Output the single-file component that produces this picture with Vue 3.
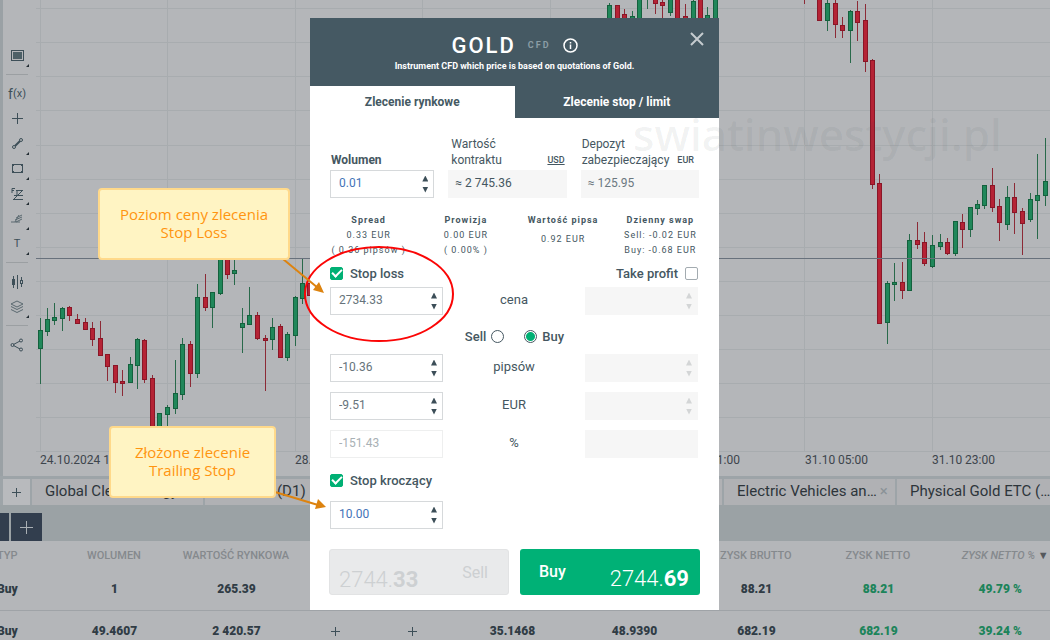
<script setup>
import { ref } from 'vue'

const gridY = [8, 42, 76, 110, 145, 179, 213, 247, 281, 315, 349, 383, 417, 451]
const gridX = [40, 167, 295, 422, 550, 677, 804, 932]

// [x, high, low, body top, body bottom, direction]
const candles = [
  [40, 318, 384, 330, 349, 'g'], [47, 308, 336, 319, 332, 'g'], [54, 303, 325, 317, 321, 'g'],
  [62, 307, 331, 308, 319, 'g'], [69, 306, 321, 307, 316, 'r'], [77, 314, 324, 319, 324, 'r'],
  [85, 318, 330, 322, 330, 'r'], [92, 322, 346, 328, 340, 'r'], [100, 321, 356, 338, 356, 'r'],
  [107, 354, 381, 354, 367, 'r'], [115, 365, 393, 365, 383, 'r'], [122, 370, 396, 381, 384, 'r'],
  [130, 357, 383, 364, 383, 'g'], [137, 338, 389, 339, 366, 'g'], [144, 339, 383, 340, 380, 'r'],
  [152, 375, 430, 378, 430, 'r'], [159, 413, 430, 413, 430, 'g'], [167, 405, 428, 407, 415, 'g'],
  [175, 360, 414, 393, 409, 'g'], [182, 338, 400, 344, 395, 'g'], [190, 341, 387, 344, 374, 'r'],
  [197, 284, 378, 297, 374, 'g'], [205, 274, 311, 297, 308, 'r'], [212, 292, 328, 292, 308, 'g'],
  [220, 250, 295, 252, 294, 'g'], [227, 250, 279, 252, 275, 'r'], [234, 255, 285, 270, 274, 'g'],
  [242, 308, 353, 323, 328, 'g'], [249, 287, 325, 315, 325, 'g'], [257, 312, 340, 315, 339, 'r'],
  [265, 335, 391, 338, 341, 'r'], [272, 318, 350, 327, 340, 'g'], [280, 324, 358, 326, 358, 'r'],
  [287, 332, 361, 334, 358, 'g'], [295, 296, 346, 297, 336, 'g'], [302, 258, 304, 283, 299, 'g'],
  [309, 283, 296, 283, 296, 'r'],
  [609, 3, 22, 5, 22, 'g'], [617, 5, 22, 5, 22, 'r'], [624, 9, 22, 14, 22, 'r'],
  [632, 11, 22, 16, 22, 'g'], [639, 0, 22, -2, 22, 'g'], [647, 0, 9, 0, 0, 'g'],
  [655, 0, 14, -2, 4, 'r'], [662, 0, 22, 2, 6, 'r'], [670, 0, 16, -2, 13, 'g'],
  [677, 0, 22, -2, 22, 'r'], [685, 4, 22, 16, 22, 'r'], [693, 0, 22, 1, 22, 'g'],
  [700, 0, 22, -2, 22, 'r'], [707, 7, 22, 15, 22, 'g'], [715, 0, 22, -2, 22, 'g'],
  [804, 0, 4, 0, 0, 'r'], [819, 0, 21, -2, 21, 'r'], [827, 0, 31, 3, 21, 'g'],
  [835, 0, 38, 3, 25, 'r'], [842, 17, 38, 25, 31, 'r'], [850, 10, 63, 11, 31, 'g'],
  [857, 1, 41, 11, 23, 'r'], [865, 4, 72, 20, 62, 'r'], [872, 59, 189, 60, 185, 'r'],
  [879, 174, 324, 183, 324, 'r'], [887, 281, 344, 283, 323, 'g'], [894, 263, 301, 282, 285, 'g'],
  [902, 262, 299, 282, 291, 'r'], [909, 234, 291, 240, 291, 'g'], [917, 222, 249, 240, 245, 'r'],
  [924, 232, 266, 242, 264, 'r'], [932, 235, 268, 245, 267, 'g'], [940, 234, 250, 242, 247, 'g'],
  [947, 238, 255, 242, 254, 'r'], [955, 221, 256, 221, 254, 'g'], [962, 214, 248, 222, 230, 'r'],
  [970, 207, 237, 207, 230, 'g'], [977, 200, 215, 204, 209, 'g'], [984, 185, 209, 185, 206, 'g'],
  [992, 168, 212, 185, 208, 'r'], [999, 199, 241, 206, 223, 'r'], [1007, 186, 230, 197, 225, 'g'],
  [1014, 183, 234, 197, 213, 'r'], [1022, 208, 255, 211, 224, 'r'], [1030, 193, 222, 199, 220, 'g'],
  [1037, 154, 239, 195, 201, 'g'], [1045, 138, 206, 181, 196, 'g'],
]

const times = [
  [40, '24.10.2024 11:00'], [295, '28.10 05:00'], [677, '30.10 11:00'],
  [805, '31.10 05:00'], [932, '31.10 23:00'],
]

const tabs = [
  { id: 1, name: 'Global Clean Energy' },
  { id: 2, name: 'Amazon (D1)' },
  { id: 3, name: '' },
  { id: 4, name: '' },
  { id: 5, name: 'Electric Vehicles an…', close: true },
  { id: 6, name: 'Physical Gold ETC (…' },
]

const rows = [
  ['Buy', '1', '265.39', '', '', '', '', '88.21', '88.21', '49.79 %'],
  ['Buy', '49.4607', '2 420.57', '+', '+', '35.1468', '48.9390', '682.19', '682.19', '39.24 %'],
]

const volume = ref('0.01')
const stopLoss = ref(true)
const takeProfit = ref(false)
const side = ref('buy')
const trailing = ref(true)
const trailingValue = ref('10.00')
const levels = ref([
  { id: 'price', label: 'cena', value: '2734.33', spin: true },
  { id: 'pips', label: 'pipsów', value: '-10.36', spin: true },
  { id: 'eur', label: 'EUR', value: '-9.51', spin: true },
  { id: 'percent', label: '%', value: '-151.43', spin: false },
])
</script>

<template>
  <div class="app">
    <section class="workspace">
      <nav class="tools" aria-label="Narzędzia wykresu">
        <div class="group">
          <button class="tool more" aria-label="Szablon">
            <svg width="13" height="11" viewBox="0 0 13 11"><rect x=".5" y=".5" width="12" height="10" fill="none" stroke="#3d4f58" /><rect x="2" y="2" width="9" height="7" fill="#4d6067" /></svg>
          </button>
        </div>
        <div class="group">
          <button class="tool fx">f<small>(x)</small></button>
          <button class="tool" aria-label="Celownik">
            <svg width="11" height="11" viewBox="0 0 11 11"><path d="M5.500 0v11M0 5.500h11" class="ink" /></svg>
          </button>
          <button class="tool more" aria-label="Linia">
            <svg width="11" height="11" viewBox="0 0 11 11"><path d="M3 8l5-5" class="ink bold" /><circle cx="2" cy="9" r="1.500" class="ink" /><circle cx="9" cy="2" r="1.500" class="ink" /></svg>
          </button>
          <button class="tool more" aria-label="Prostokąt">
            <svg width="11" height="9" viewBox="0 0 11 9"><path d="M.5 .5h10v8H.5z" class="ink" /><path d="M0 0h2v2H0zM9 0h2v2H9zM0 7h2v2H0zM9 7h2v2H9z" fill="#3d4f58" /></svg>
          </button>
          <button class="tool more" aria-label="Fibonacci">
            <svg width="13" height="12" viewBox="0 0 13 12"><path d="M1 5V.5h3M1 2.500h2M5 2.500h7M3 7.500h9M2 11.500h10M11 3l-8 8M6 3v4" class="ink" /></svg>
          </button>
          <button class="tool more" aria-label="Widły">
            <svg width="12" height="12" viewBox="0 0 12 12"><path d="M0 9h9M4 9l4-7M5 5l6-3M4 7l7-3M5 9l6-3" class="ink thin" /></svg>
          </button>
          <button class="tool more letter">T</button>
        </div>
        <div class="group">
          <button class="tool" aria-label="Typ wykresu">
            <svg width="13" height="14" viewBox="0 0 13 14"><path d="M2.500 1v12M6.500 0v14M10.500 2v10" class="ink" /><rect x="1" y="4" width="3" height="6" fill="#3d4f58" /><rect x="9.500" y="5.500" width="2" height="3" fill="#b4b6b9" stroke="#3d4f58" /></svg>
          </button>
          <button class="tool more" aria-label="Warstwy">
            <svg width="14" height="14" viewBox="0 0 14 14"><path d="M7 1l6 3-6 3-6-3zM1 6.500l6 3 6-3M1 9.500l6 3 6-3" class="ink thin" /></svg>
          </button>
        </div>
        <div class="group last">
          <button class="tool" aria-label="Udostępnij">
            <svg width="14" height="14" viewBox="0 0 14 14"><path d="M3.500 6.500L10 3M3.500 7.500L10 11" class="ink" /><circle cx="2.500" cy="7" r="1.500" class="ink" /><circle cx="11" cy="2.500" r="1.500" class="ink" /><circle cx="11" cy="11.500" r="1.500" class="ink" /></svg>
          </button>
        </div>
      </nav>
      <svg class="chart" viewBox="36 0 1014 476" preserveAspectRatio="xMidYMid slice" role="img" aria-label="Wykres świecowy">
        <rect v-for="y in gridY" :key="'y' + y" x="36" :y="y" width="1014" height="1" fill="#a8acaf" />
        <rect v-for="x in gridX" :key="'x' + x" :x="x" y="0" width="1" height="452" fill="#a8acaf" />
        <g v-for="c in candles" :key="c[0]" :class="c[5]">
          <rect :x="c[0]" :y="c[1]" width="1" :height="c[2] - c[1]" class="wick" />
          <rect v-if="c[4] > c[3]" :x="c[0] - 1.5" :y="c[3] + 0.5" width="4" :height="c[4] - c[3] - 1" class="body" />
        </g>
        <rect x="36" y="258" width="1014" height="1" fill="#68717c" />
        <text v-for="t in times" :key="t[1]" :x="t[0]" y="464">{{ t[1] }}</text>
      </svg>
    </section>

    <nav class="tabs" aria-label="Wykresy">
      <button class="tab add" aria-label="Dodaj wykres"><svg width="9" height="9" viewBox="0 0 9 9"><path d="M4.500 0v9M0 4.500h9" class="ink" /></svg></button>
      <button v-for="t in tabs" :key="t.id" class="tab"><span>{{ t.name }}</span><i v-if="t.close">×</i></button>
    </nav>
    <div class="band">
      <button class="dark" aria-label="Pozycje"></button>
      <button class="dark plus" aria-label="Dodaj kartę"><svg width="13" height="13" viewBox="0 0 13 13"><path d="M6.500 0v13M0 6.500h13" fill="none" stroke="#a9afb4" /></svg></button>
    </div>

    <table class="positions">
      <colgroup>
        <col class="c-type"><col class="c-wide"><col class="c-wide"><col class="c-slim"><col class="c-slim">
        <col class="c-wide"><col class="c-wide"><col class="c-wide"><col class="c-wide"><col>
      </colgroup>
      <thead>
        <tr>
          <th><span>TYP</span></th><th>WOLUMEN</th><th>WARTOŚĆ RYNKOWA</th><th></th><th></th><th></th><th></th>
          <th>ZYSK BRUTTO</th><th>ZYSK NETTO</th><th class="sorted"><em>ZYSK NETTO %</em> ▼</th>
        </tr>
      </thead>
      <tbody>
        <tr v-for="r in rows" :key="r[1]">
          <td v-for="(v, i) in r" :key="i" :class="{ profit: i > 7 }">
            <svg v-if="v === '+'" width="9" height="9" viewBox="0 0 9 9"><path d="M4.500 0v9M0 4.500h9" class="ink" /></svg>
            <span v-else>{{ v }}</span>
          </td>
        </tr>
      </tbody>
    </table>

    <div class="layer">
      <div class="anchor">
        <form class="dialog" role="dialog" aria-label="GOLD" @submit.prevent>
          <header>
            <h1>GOLD <small>CFD</small>
              <svg width="15" height="15" viewBox="0 0 15 15"><circle cx="7.500" cy="7.500" r="6.500" fill="none" stroke="#fff" stroke-width="1.500" /><path d="M7.500 6.500v4.500M7.500 4v1.500" stroke="#fff" stroke-width="1.500" /></svg>
            </h1>
            <p>Instrument CFD which price is based on quotations of Gold.</p>
            <button class="close" type="button" aria-label="Zamknij"><svg width="14" height="14" viewBox="0 0 14 14"><path d="M1 1l12 12M13 1L1 13" stroke="#c5cbcf" stroke-width="2" /></svg></button>
          </header>
          <div class="modes">
            <button type="button" class="active">Zlecenie rynkowe</button>
            <button type="button">Zlecenie stop / limit</button>
          </div>

          <div class="content">
            <div class="contract">
              <div class="cell">
                <label for="volume"><b>Wolumen</b></label>
                <div class="field blue">
                  <input id="volume" v-model="volume">
                  <span class="spin"><button type="button" aria-label="Więcej"></button><button type="button" aria-label="Mniej"></button></span>
                </div>
              </div>
              <div class="cell">
                <div class="cap"><span>Wartość<br>kontraktu</span><u>USD</u></div>
                <div class="value"><span>≈</span>2 745.36</div>
              </div>
              <div class="cell">
                <div class="cap"><span>Depozyt<br>zabezpieczający</span><small>EUR</small></div>
                <div class="value light"><span>≈</span>125.95</div>
              </div>
            </div>

            <dl class="stats">
              <div><dt>Spread</dt><dd>0.33 EUR</dd><dd>( 0.36 pipsów )</dd></div>
              <div><dt>Prowizja</dt><dd>0.00 EUR</dd><dd>( 0.00% )</dd></div>
              <div><dt>Wartość pipsa</dt><dd class="single">0.92 EUR</dd></div>
              <div><dt>Dzienny swap</dt><dd>Sell: -0.02 EUR</dd><dd>Buy: -0.68 EUR</dd></div>
            </dl>

            <div class="checks">
              <label><input v-model="stopLoss" type="checkbox"> Stop loss</label>
              <label>Take profit <input v-model="takeProfit" type="checkbox"></label>
            </div>

            <div class="levels">
              <template v-for="l in levels" :key="l.id">
                <div class="level">
                  <div class="field" :class="{ faint: !l.spin }">
                    <input :id="l.id" v-model="l.value" :disabled="!l.spin">
                    <span v-if="l.spin" class="spin"><button type="button" aria-label="Więcej"></button><button type="button" aria-label="Mniej"></button></span>
                  </div>
                  <label :for="l.id">{{ l.label }}</label>
                  <div class="field off">
                    <input disabled :aria-label="'Take profit ' + l.label">
                    <span v-if="l.spin" class="spin"><button type="button" disabled aria-label="Więcej"></button><button type="button" disabled aria-label="Mniej"></button></span>
                  </div>
                </div>
                <div v-if="l.id === 'price'" class="sides">
                  <label>Sell <input v-model="side" type="radio" value="sell" name="side"></label>
                  <label><input v-model="side" type="radio" value="buy" name="side"> Buy</label>
                </div>
              </template>
            </div>

            <div class="checks trail">
              <label><input v-model="trailing" type="checkbox"> Stop kroczący</label>
            </div>
            <div class="level">
              <div class="field blue">
                <input v-model="trailingValue" aria-label="Stop kroczący">
                <span class="spin"><button type="button" aria-label="Więcej"></button><button type="button" aria-label="Mniej"></button></span>
              </div>
            </div>

            <div class="actions">
              <button type="button" class="sell" disabled><span class="price">2744.<b>33</b></span><span class="word">Sell</span></button>
              <button type="submit" class="buy"><span class="word">Buy</span><span class="price">2744.<b>69</b></span></button>
            </div>
          </div>
        </form>

        <svg class="marks" width="409" height="592" viewBox="0 0 409 592">
          <ellipse cx="69" cy="276" rx="74" ry="47" fill="none" stroke="#fb0505" stroke-width="2" />
          <path d="M-27 241L8 270M-35 474L8 487" stroke="#dd830f" stroke-width="2" fill="none" />
          <path d="M14 275L3 272L9 264zM16 489L5 491L8 481z" fill="#dd830f" />
        </svg>
        <div class="note first">Poziom ceny zlecenia<br>Stop Loss</div>
        <div class="note second">Złożone zlecenie<br>Trailing Stop</div>
        <div class="watermark">swiatinwestycji.pl</div>
      </div>
    </div>
  </div>
</template>

<style>
body { margin: 0; }
</style>

<style scoped>
* { box-sizing: border-box; }
.app {
  position: relative;
  height: 100vh;
  min-height: 640px;
  overflow: hidden;
  background: #b4b6b9;
  color: #303c45;
  font-family: Roboto, "Liberation Sans", sans-serif;
  font-size: 12px;
}
button { padding: 0; border: 0; background: none; color: inherit; font: inherit; }
input { margin: 0; font: inherit; color: inherit; }
svg { display: block; }
.ink { fill: none; stroke: #3d4f58; }
.thin { stroke: #5a6970; }
.bold { stroke-width: 2; }

.workspace { display: flex; height: 476px; border-left: 3px solid #9aa1a5; }
.tools { flex: 0 0 33px; padding-top: 37px; }
.group { margin: 0 8px 0 3px; padding: 6px 0; border-bottom: 1px solid #9b9fa2; }
.group.last { border: 0; }
.tool { position: relative; display: flex; align-items: center; justify-content: center; width: 22px; height: 25px; }
.tool.more::after {
  content: "";
  position: absolute;
  right: -1px;
  bottom: 1px;
  width: 3px;
  height: 3px;
  background: #222c33;
  clip-path: polygon(100% 0, 100% 100%, 0 100%);
}
.fx { font-size: 14px; color: #3d4f58; }
.fx small { font-size: 11px; }
.letter { font-size: 11px; color: #3d4f58; }
.chart { flex: 1; min-width: 0; height: 476px; }
.chart text { font-size: 12px; fill: #3d454c; }
.g .wick { fill: #28694a; }
.g .body { fill: #20875a; stroke: #14613d; }
.r .wick { fill: #8c2a36; }
.r .body { fill: #b52335; stroke: #8a1627; }

.tabs { display: flex; gap: 2px; height: 29px; padding: 3px 0 0 3px; background: #9da4a8; overflow: hidden; }
.tab { display: flex; flex: 0 0 171px; align-items: center; padding: 0 0 2px 13px; background: #b0b1b4; color: #2d353b; font-size: 15px; white-space: nowrap; }
.tab.add { flex-basis: 27px; justify-content: center; padding: 0; background: #b8babd; }
.tab i { padding-left: 3px; color: #8a9297; font-style: normal; }
.band { display: flex; gap: 2px; align-items: flex-end; height: 36px; background: #9ba2a5; }
.dark { width: 9px; height: 28px; background: #323e4e; }
.plus { display: flex; align-items: center; justify-content: center; width: 31px; }

.positions { width: 100%; table-layout: fixed; border-collapse: collapse; }
.c-type { width: 5%; }
.c-wide { width: 11.620%; }
.c-slim { width: 7.330%; }
th { height: 27px; padding: 2px 0 0 1px; color: #85898d; font-size: 11px; font-weight: 500; white-space: nowrap; }
th:first-child, td:first-child { padding-left: 0; text-align: left; }
tr > :first-child span { margin-left: -3px; }
td { height: 42px; padding: 0 0 0 2px; border-bottom: 1px solid #9fa3a7; text-align: center; font-weight: 900; }
td:last-child { padding-left: 12px; }
td svg { margin: 0 auto; }
.profit { color: #1c845a; }
th.sorted { padding-left: 22px; color: #55595d; }
.sorted em { color: #85898d; }

.layer { position: absolute; inset: 0; display: flex; justify-content: center; align-items: flex-start; padding: 18px 21px 0 0; }
.anchor { position: relative; flex: 0 0 auto; }
.dialog { width: 409px; background: #fff; color: #455761; }
header { position: relative; height: 68px; padding-top: 14px; background: #455963; color: #fff; text-align: center; }
h1 { display: flex; align-items: center; justify-content: center; gap: 12px; margin: 0; font-size: 22px; line-height: 27px; font-weight: 500; letter-spacing: 2px; }
h1 small { color: #8b9da5; font-size: 9px; font-weight: 700; }
header p { margin: 0; font-size: 9px; line-height: 14px; font-weight: 700; }
.close { position: absolute; top: 14px; right: 15px; }
.modes { display: flex; height: 32px; }
.modes button { flex: 1; background: #455963; color: #fff; font-weight: 700; }
.modes .active { background: #fff; color: #455963; }
.content { padding: 18px 20px 15px; }

.contract { display: grid; grid-template-columns: 104fr 118fr 118fr; gap: 14px; }
.cell { display: flex; flex-direction: column; justify-content: flex-end; gap: 2px; min-width: 0; line-height: 16px; }
.cell label { padding-left: 1px; }
.cap { display: flex; align-items: flex-end; justify-content: space-between; padding: 0 2px 0 3px; white-space: nowrap; }
.cell:last-child .cap { justify-content: flex-start; gap: 8px; padding-left: 1px; }
.cap u, .cap small { font-size: 9px; font-weight: 500; }
.value { display: flex; gap: 3px; height: 28px; padding: 0 7px; background: #f6f6f6; line-height: 27px; }
.value.light { color: #6b7880; }
.field { display: flex; align-items: center; height: 28px; padding: 0 5px 0 8px; border: 1px solid #d6d9db; background: #fff; color: #66737b; }
.field input { flex: 1; min-width: 0; width: 0; padding: 0 0 2px; border: 0; outline: 0; background: none; }
.field.blue { color: #4474b8; }
.field.faint { border-color: #eeefef; color: #a9b1b5; }
.field.off { border-color: #f6f6f6; background: #f6f6f6; }
.spin { display: flex; flex-direction: column; gap: 5px; }
.spin button { width: 6px; height: 6px; background: #3c4e58; clip-path: polygon(50% 0, 100% 100%, 0 100%); }
.spin button:last-child { clip-path: polygon(0 0, 100% 0, 50% 100%); }
.off .spin button { background: #d3d5d6; }

.stats { display: grid; grid-template-columns: repeat(4, 1fr); margin: 15px -10px 0; text-align: center; font-size: 9px; line-height: 15px; letter-spacing: 1px; white-space: nowrap; }
.stats dt { font-weight: 700; }
.stats dd { margin: 0; }
.stats .single { padding-top: 4px; }

.checks { display: flex; justify-content: space-between; margin: 7px 1px 6px 0; height: 16px; font-size: 13px; font-weight: 500; }
.checks label, .sides label { display: flex; align-items: center; gap: 7px; }
.trail { margin: 14px 0 13px; }
input[type="checkbox"] { appearance: none; display: grid; place-items: center; width: 13px; height: 13px; border: 1px solid #a3abb0; border-radius: 2px; background: #fff; }
input[type="checkbox"]:checked { border-color: #00b074; background: #00b074; }
input[type="checkbox"]:checked::before { content: ""; width: 8px; height: 4px; border: solid #fff; border-width: 0 0 2px 2px; transform: translateY(-1px) rotate(-45deg); }
.levels { display: grid; gap: 10px; }
.level { display: grid; grid-template-columns: 113fr 142fr 113fr; align-items: center; margin-right: 1px; }
.level label { padding-bottom: 4px; text-align: center; font-size: 13px; }
.sides { display: flex; justify-content: center; gap: 20px; height: 16px; margin-top: 3px; font-size: 13px; font-weight: 500; }
.sides label { gap: 5px; }
input[type="radio"] { appearance: none; width: 13px; height: 13px; border: 1px solid #455761; border-radius: 50%; background: #fff; }
input[type="radio"]:checked { background: radial-gradient(circle, #00b074 4px, #fff 5px); }

.actions { display: grid; grid-template-columns: 1fr 1fr; gap: 11px; margin: 20px -1px 0; }
.actions button { display: flex; justify-content: space-between; height: 46px; padding: 0 11px 0 19px; border-radius: 3px; }
.actions .sell { padding: 0 20px 0 9px; border: 1px solid #e2e3e4; background: #e9eaeb; color: #cdd0d2; }
.actions .buy { background: #00b176; color: #fff; }
.word { font-size: 16px; line-height: 46px; }
.buy .word { font-weight: 500; }
.price { padding-top: 15px; font-size: 22px; line-height: 30px; font-weight: 300; }
.price b { font-weight: 700; }

.marks { position: absolute; left: 0; top: 0; overflow: visible; pointer-events: none; }
.note { position: absolute; display: grid; place-items: center; padding-bottom: 2px; height: 72px; border: 2px solid #ffd98a; border-radius: 4px; background: #fff4c3; color: #ff9410; font-family: "Open Sans", "Noto Sans", sans-serif; font-size: 15px; line-height: 18px; text-align: center; }
.first { left: -212px; top: 170px; width: 192px; }
.second { left: -201px; top: 408px; width: 167px; }
.watermark { position: absolute; left: 323px; top: 86px; color: rgba(60, 70, 75, 0.08); font-family: "Noto Sans", "Open Sans", sans-serif; font-size: 44px; font-weight: 500; line-height: 60px; white-space: nowrap; pointer-events: none; }
</style>
